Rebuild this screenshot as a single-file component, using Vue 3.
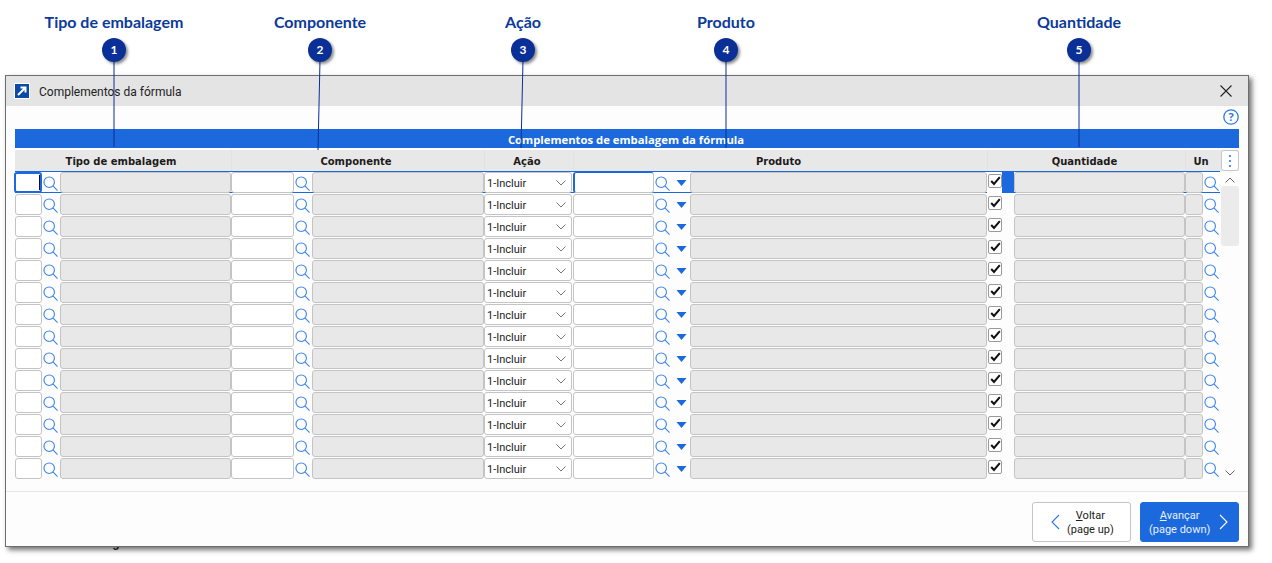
<script setup>
const callouts = [
  { n: 1, label: 'Tipo de embalagem', x: 114, x2: 114, y2: 147 },
  { n: 2, label: 'Componente', x: 320, x2: 318, y2: 150 },
  { n: 3, label: 'Ação', x: 523, x2: 521, y2: 148 },
  { n: 4, label: 'Produto', x: 726, x2: 726, y2: 148 },
  { n: 5, label: 'Quantidade', x: 1079, x2: 1079, y2: 147 }
]
const rows = Array.from({ length: 14 }, (_, i) => i)
</script>

<template>
  <div class="page">
    <div class="behind">textos de embalagem e fórmula atual total</div>

    <section class="window">
      <header class="titlebar">
        <svg class="app-icon" width="16" height="16" viewBox="0 0 16 16">
          <rect x="0.5" y="0.5" width="15" height="15" fill="#0c4aa8" stroke="#fff" />
          <path d="M4 12 L11 5 M6.5 4.5 H11.5 V9.5" fill="none" stroke="#fff" stroke-width="2" />
        </svg>
        <span class="title">Complementos da fórmula</span>
        <svg class="close" width="12" height="12" viewBox="0 0 12 12">
          <path d="M0.5 0.5 L11.5 11.5 M11.5 0.5 L0.5 11.5" stroke="#222" stroke-width="1.1" fill="none" />
        </svg>
      </header>

      <div class="helpline">
        <svg width="16" height="16" viewBox="0 0 16 16">
          <circle cx="8" cy="8" r="7.2" fill="none" stroke="#2f78e4" stroke-width="1.3" />
          <text x="8" y="12" text-anchor="middle" class="help-q">?</text>
        </svg>
      </div>

      <div class="content">
        <div class="bar">Complementos de embalagem da fórmula</div>

        <div class="head">
          <div class="th h1">Tipo de embalagem</div>
          <div class="th h2">Componente</div>
          <div class="th h3">Ação</div>
          <div class="th h4">Produto</div>
          <div class="th h5">Quantidade</div>
          <div class="th h6">Un</div>
          <div class="kebab">
            <svg width="4" height="14" viewBox="0 0 4 14">
              <circle cx="2" cy="2" r="1.1" fill="#2f78e4" />
              <circle cx="2" cy="7" r="1.1" fill="#2f78e4" />
              <circle cx="2" cy="12" r="1.1" fill="#2f78e4" />
            </svg>
          </div>
        </div>

        <div class="table">
          <div class="rows">
            <div v-for="r in rows" :key="r" class="row" :class="{ selected: r === 0 }">
              <div class="field first" :class="{ focused: r === 0 }"><i v-if="r === 0" class="caret"></i></div>
              <div class="lookup"><svg width="15" height="15" viewBox="0 0 16 16"><circle cx="6.6" cy="6.6" r="5.6" /><path d="M10.6 10.6 L15.5 15.5" /></svg></div>
              <div class="ro"></div>
              <div class="field"></div>
              <div class="lookup"><svg width="15" height="15" viewBox="0 0 16 16"><circle cx="6.6" cy="6.6" r="5.6" /><path d="M10.6 10.6 L15.5 15.5" /></svg></div>
              <div class="ro"></div>
              <div class="select">
                <span class="select-text">1-Incluir</span>
                <svg width="10" height="6" viewBox="0 0 10 6"><path d="M0.5 0.5 L5 5 L9.5 0.5" fill="none" stroke="#777" /></svg>
              </div>
              <div class="field prod" :class="{ focusedthin: r === 0 }"></div>
              <div class="lookup double">
                <svg width="15" height="15" viewBox="0 0 16 16"><circle cx="6.6" cy="6.6" r="5.6" /><path d="M10.6 10.6 L15.5 15.5" /></svg>
                <svg class="tri" width="11" height="6" viewBox="0 0 10 6"><path d="M0 0 H10 L5 6 Z" /></svg>
              </div>
              <div class="ro"></div>
              <div class="checkcell">
                <span class="check">
                  <svg width="11" height="10" viewBox="0 0 11 10"><path d="M1.2 5 L4 8 L9.8 1.2" fill="none" stroke="#111" stroke-width="2" /></svg>
                </span>
              </div>
              <div class="ro"></div>
              <div class="ro"></div>
              <div class="lookup last"><svg width="15" height="15" viewBox="0 0 16 16"><circle cx="6.6" cy="6.6" r="5.6" /><path d="M10.6 10.6 L15.5 15.5" /></svg></div>
            </div>
          </div>
          <div class="scroll">
            <svg width="10" height="6" viewBox="0 0 10 6"><path d="M0.5 5.5 L5 1 L9.5 5.5" fill="none" stroke="#666" /></svg>
            <div class="thumb"></div>
            <svg class="down" width="10" height="6" viewBox="0 0 10 6"><path d="M0.5 0.5 L5 5 L9.5 0.5" fill="none" stroke="#666" /></svg>
          </div>
        </div>
      </div>

      <footer class="footer">
        <button class="btn">
          <svg width="9" height="16" viewBox="0 0 9 16"><path d="M8 1 L1 8 L8 15" fill="none" stroke="#2f78e4" stroke-width="1.1" /></svg>
          <span class="btn-text"><span><u>V</u>oltar</span><span>(page up)</span></span>
        </button>
        <button class="btn primary">
          <span class="btn-text"><span><u>A</u>vançar</span><span>(page down)</span></span>
          <svg width="9" height="16" viewBox="0 0 9 16"><path d="M1 1 L8 8 L1 15" fill="none" stroke="#fff" stroke-width="1.1" /></svg>
        </button>
      </footer>
    </section>

    <svg class="leaders" width="1272" height="563" viewBox="0 0 1272 563">
      <line v-for="c in callouts" :key="c.n" :x1="c.x" y1="60" :x2="c.x2" :y2="c.y2" stroke="#0a2f96" stroke-width="1" />
    </svg>

    <div v-for="c in callouts" :key="'c' + c.n" class="callout" :style="{ left: c.x + 'px' }">
      <div class="callout-label">{{ c.label }}</div>
      <div class="badge">{{ c.n }}</div>
    </div>
  </div>
</template>

<style scoped>
.page {
  position: relative;
  width: 1272px;
  height: 563px;
  background: #fff;
  overflow: hidden;
  padding: 75px 0 0 5px;
  box-sizing: border-box;
  font-family: "Roboto", "Open Sans", sans-serif;
  font-size: 12px;
  color: #222;
}
.behind {
  position: absolute;
  left: 15px;
  top: 536px;
  font-size: 12px;
  font-weight: 700;
  line-height: 14px;
  font-family: "Liberation Sans", sans-serif;
  color: #333;
}
.window {
  position: relative;
  width: 1244px;
  height: 472px;
  box-sizing: border-box;
  border: 1px solid #6d6d6d;
  background: #fdfdfd;
  box-shadow: 3px 3px 5px rgba(0, 0, 0, 0.55);
  display: flex;
  flex-direction: column;
}
.titlebar {
  height: 30px;
  background: #e4e4e4;
  display: flex;
  align-items: center;
  padding: 0 16px 0 8px;
  flex: none;
}
.app-icon { flex: none; }
.title {
  margin-left: 9px;
  padding-top: 2px;
  font-size: 12px;
  color: #222;
}
.close { margin-left: auto; }
.helpline {
  height: 23px;
  flex: none;
  display: flex;
  justify-content: flex-end;
  align-items: flex-start;
  padding: 3px 9px 0 0;
  box-sizing: border-box;
}
.help-q {
  font-size: 11px;
  font-weight: 700;
  fill: #2f78e4;
  font-family: "Open Sans", sans-serif;
}
.content {
  margin: 0 9px;
  flex: none;
}
.bar {
  height: 19px;
  background: #1b69dd;
  color: #fff;
  font-family: "Open Sans", sans-serif;
  font-weight: 700;
  font-size: 11.3px;
  line-height: 22px;
  text-align: center;
  overflow: hidden;
  padding-right: 2px;
  box-sizing: border-box;
}
.head {
  margin-top: 2px;
  height: 21px;
  display: grid;
  grid-template-columns: 216px 253px 89px 414px 198px 35px 19px;
  background: #e8e8e8;
}
.th {
  font-weight: 700;
  line-height: 24px;
  text-align: center;
  color: #1c1c1c;
  border-left: 1px solid #e2e2e2;
  font-family: "DejaVu Sans", sans-serif;
  font-size: 10px;
  padding-right: 4px;
}
.th.h1 { border-left: 0; }
.kebab {
  margin-left: 1px;
  height: 21px;
  background: #fff;
  border: 1px solid #c6c6c6;
  border-radius: 3px;
  box-sizing: border-box;
  display: flex;
  align-items: center;
  justify-content: center;
}
.table {
  display: flex;
}
.rows {
  width: 1205px;
  flex: none;
  padding-top: 1px;
}
.row {
  display: grid;
  grid-template-columns: 27px 18px 171px 63px 18px 172px 89px 81px 36px 297px 27px 171px 18px 17px;
  height: 20px;
  padding: 0;
  margin-bottom: 2px;
  align-items: stretch;
}
.row.selected {
  box-shadow: 0 -1px 0 #1b69dd, 0 1px 0 #1b69dd;
  background: #fff;
}
.field {
  background: #fff;
  border: 1px solid #c4c4c4;
  border-radius: 3px;
  box-sizing: border-box;
  position: relative;
}
.field.focused {
  border: 2px solid #1b69dd;
  margin-left: -1px;
}
.field.focusedthin {
  border-left: 2px solid #1b69dd;
  border-top-color: #1b69dd;
}
.caret {
  position: absolute;
  right: 0;
  top: 1px;
  bottom: 1px;
  width: 1px;
  background: #111;
}
.ro {
  background: #e8e8e8;
  border: 1px solid #c4c4c4;
  border-radius: 3px;
  box-sizing: border-box;
}
.lookup {
  display: flex;
  align-items: center;
  justify-content: flex-start;
  padding: 1px 0 0 1px;
  box-sizing: border-box;
}
.lookup svg {
  display: block;
}
.lookup svg circle,
.lookup svg path {
  fill: none;
  stroke: #3d86ea;
  stroke-width: 1.2;
}
.lookup .tri path {
  fill: #1b69dd;
  stroke: none;
}
.double {
  padding-left: 1px;
  gap: 6px;
}
.select {
  background: #fff;
  border: 1px solid #c4c4c4;
  border-radius: 3px;
  box-sizing: border-box;
  margin-right: 1px;
  height: 21px;
  display: flex;
  align-items: center;
  justify-content: space-between;
  padding: 0 5px 0 2px;
  font-size: 11px;
  color: #222;
}
.select-text {
  padding-top: 2px;
}
.checkcell {
  display: flex;
  align-items: flex-start;
  padding: 2px 0 0 1px;
}
.selected .checkcell {
  background: linear-gradient(90deg, #fff 15px, #1b69dd 15px);
}
.check {
  width: 14px;
  height: 14px;
  background: #fff;
  border: 1px solid #9a9a9a;
  border-radius: 2px;
  display: flex;
  align-items: center;
  justify-content: center;
  box-sizing: border-box;
}
.scroll {
  flex: 1;
  position: relative;
  display: flex;
  flex-direction: column;
  align-items: center;
  padding-top: 6px;
}
.thumb {
  width: 18px;
  height: 60px;
  background: #ebebeb;
  border-radius: 3px;
  margin-top: 3px;
}
.down {
  margin-top: auto;
  margin-bottom: 4px;
}
.footer {
  margin-top: auto;
  height: 55px;
  flex: none;
  box-sizing: border-box;
  border-top: 1px solid #e6e6e6;
  display: flex;
  justify-content: flex-end;
  gap: 9px;
  padding: 10px 9px 0 0;
}
.btn {
  width: 99px;
  height: 40px;
  background: #fff;
  border: 1px solid #c4c4c4;
  border-radius: 3px;
  box-sizing: border-box;
  display: flex;
  align-items: center;
  padding: 0 0 0 18px;
  gap: 7px;
  font: inherit;
  font-size: 11px;
  color: #222;
  line-height: 14px;
}
.btn.primary {
  background: #1b69dd;
  border-color: #1b69dd;
  color: #e8f0fc;
  padding: 0 0 0 8px;
  gap: 9px;
}
.btn-text {
  display: flex;
  flex-direction: column;
  align-items: center;
  white-space: nowrap;
  padding-top: 2px;
}
.leaders {
  position: absolute;
  left: 0;
  top: 0;
  pointer-events: none;
}
.callout {
  position: absolute;
  top: 12px;
  width: 200px;
  margin-left: -100px;
  display: flex;
  flex-direction: column;
  align-items: center;
}
.callout-label {
  font-family: "Lato", sans-serif;
  font-weight: 700;
  font-size: 16px;
  line-height: 20px;
  color: #0b3a9a;
}
.badge {
  margin-top: 6px;
  width: 24px;
  height: 24px;
  border-radius: 50%;
  background: #0a2f96;
  color: #fff;
  font-family: "Lato", sans-serif;
  font-weight: 700;
  font-size: 12px;
  line-height: 24px;
  text-align: center;
  box-shadow: 2px 2px 3px rgba(0, 0, 0, 0.45);
}
</style>
